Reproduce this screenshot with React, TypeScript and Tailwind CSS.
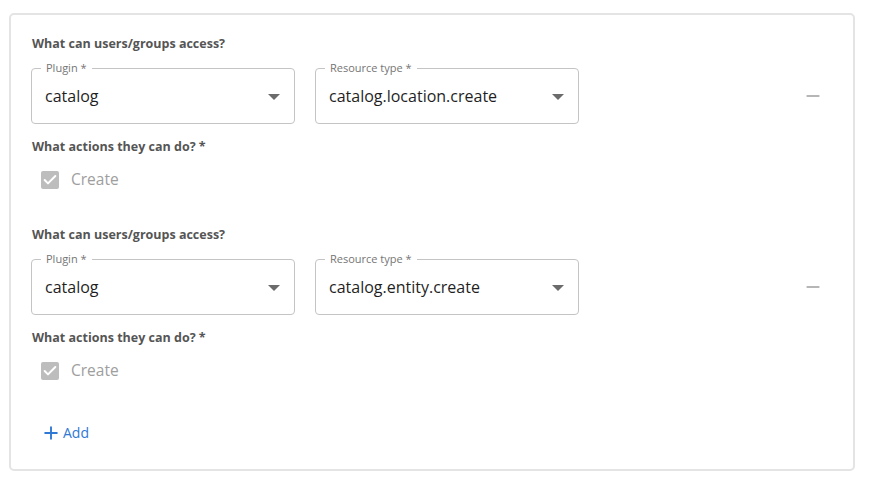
import { Check, Minus, Plus } from 'lucide-react';

type Rule = {
    plugin: string;
    resource: string;
    action: string;
};

const rules: Rule[] = [
    { plugin: 'catalog', resource: 'catalog.location.create', action: 'Create' },
    { plugin: 'catalog', resource: 'catalog.entity.create', action: 'Create' },
];

function SelectBox({ label, value }: { label: string; value: string }) {
    return (
        <div className="relative w-[264px] h-[56px] border border-[#c4c4c4] rounded-[4px] flex items-center pl-[13px] pr-[14px]">
            <span className="absolute left-[9px] -top-[9px] bg-white px-[5px] text-[11px] leading-[16px] text-[#757575]">
                {label} *
            </span>
            <span className="flex-1 text-[16px] text-[#1f1f1f]">{value}</span>
            <svg width="12" height="6" viewBox="0 0 12 6" className="mt-[1px]">
                <path d="M0 0 L12 0 L6 6 Z" fill="#6b6b6b" />
            </svg>
        </div>
    );
}

function RuleBlock({ rule }: { rule: Rule }) {
    return (
        <div>
            <h3 className="text-[12.5px] leading-[16px] font-bold text-[#555]">What can users/groups access?</h3>
            <div className="flex items-center mt-[16px] -ml-[1px]">
                <div className="flex gap-[20px]">
                    <SelectBox label="Plugin" value={rule.plugin} />
                    <SelectBox label="Resource type" value={rule.resource} />
                </div>
                <div className="flex-1 flex justify-end pr-[30px]">
                    <Minus size={20} strokeWidth={2} className="text-[#9e9e9e]" />
                </div>
            </div>
            <h3 className="text-[12.5px] leading-[16px] font-bold text-[#555] mt-[15px]">What actions they can do? *</h3>
            <label className="flex items-center gap-[12px] mt-[13px] ml-[9px] h-[24px]">
                <span className="w-[18px] h-[18px] rounded-[2px] bg-[#bdbdbd] flex items-center justify-center">
                    <Check size={16} strokeWidth={3} className="text-white" />
                </span>
                <span className="text-[15.5px] text-[#9e9e9e]">{rule.action}</span>
            </label>
        </div>
    );
}

export default function App() {
    return (
        <div className="w-[872px] h-[477px] bg-white pt-[13px] pl-[9px]" style={{ fontFamily: '"Open Sans", sans-serif' }}>
            <div className="w-[846px] h-[458px] border-2 border-[#e4e4e4] rounded-[5px] pt-[21px] pl-[21px]">
                <div className="flex flex-col gap-[35px]">
                    {rules.map((rule) => (
                        <RuleBlock key={rule.resource} rule={rule} />
                    ))}
                </div>
                <button type="button" className="flex items-center gap-[2px] mt-[39px] ml-[9px] text-[#2f78d4] text-[14px] font-medium">
                    <Plus size={20} strokeWidth={2.25} />
                    Add
                </button>
            </div>
        </div>
    );
}
